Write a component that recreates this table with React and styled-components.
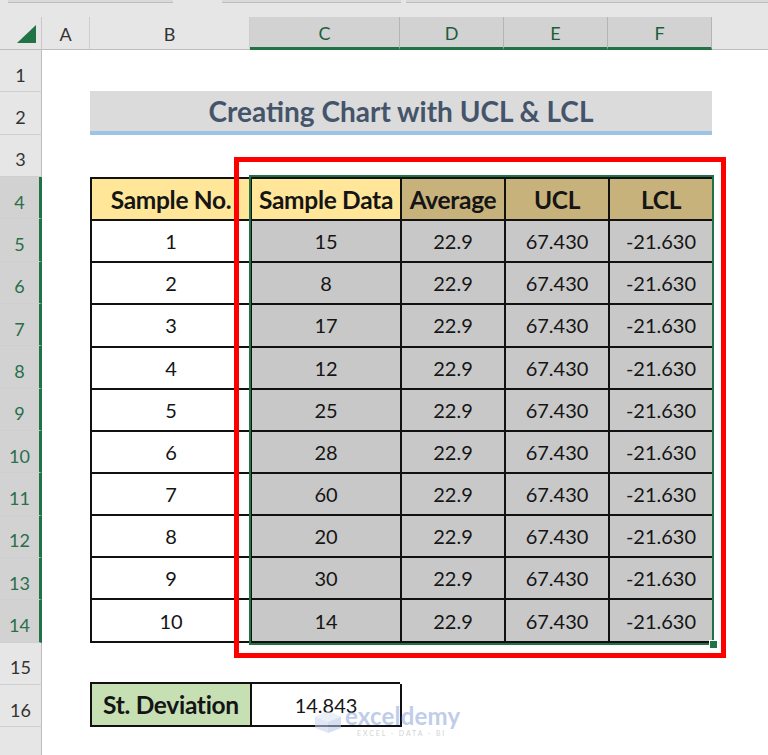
import React from "react";
import styled, { createGlobalStyle } from "styled-components";

const GlobalStyle = createGlobalStyle`
  html, body { margin: 0; padding: 0; background: #ffffff; }
  * { box-sizing: border-box; }
`;

const ROW_H = 42.33;
const GREEN = "#217346";

const Page = styled.div`
  width: 768px;
  height: 755px;
  overflow: hidden;
  display: flex;
  flex-direction: column;
  font-family: Lato, "Open Sans", sans-serif;
  background: #ffffff;
`;

const TopStrip = styled.div`
  height: 17px;
  flex: none;
  background: #e6e6e6;
  display: flex;
  align-items: flex-start;
  padding-left: 8px;
`;

const StripBar = styled.div`
  height: 3px;
  width: ${(p) => p.$w}px;
  margin-right: ${(p) => p.$gap || 0}px;
  flex: ${(p) => (p.$grow ? 1 : "none")};
  background: #d9d9d9;
  border-bottom: 1px solid #bdbdbd;
`;

const HeaderRow = styled.div`
  height: 33px;
  flex: none;
  display: flex;
  background: #e6e6e6;
`;

const Corner = styled.div`
  width: 42px;
  flex: none;
  display: flex;
  align-items: flex-end;
  justify-content: flex-end;
  padding: 0 5px 6px 0;
  border-right: 1px solid #c8c8c8;
  border-bottom: 1px solid #bdbdbd;
`;

const ColHead = styled.div`
  width: ${(p) => p.$w}px;
  flex: none;
  display: flex;
  align-items: center;
  justify-content: center;
  font-size: 18px;
  padding-top: 1px;
  color: ${(p) => (p.$sel ? "#1d5e3a" : "#333333")};
  background: ${(p) => (p.$sel ? "#d2d2d2" : "#e6e6e6")};
  border-right: 1px solid ${(p) => (p.$sel ? "#b4b4b4" : "#cdcdcd")};
  border-bottom: ${(p) => (p.$sel ? `3px solid ${GREEN}` : "1px solid #bdbdbd")};
`;

const HeaderFill = styled.div`
  flex: 1;
  border-bottom: 1px solid #bdbdbd;
`;

const Body = styled.div`
  flex: 1;
  display: flex;
  min-height: 0;
`;

const RowHeaders = styled.div`
  width: 42px;
  flex: none;
  display: flex;
  flex-direction: column;
  background: #e6e6e6;
`;

const RowHead = styled.div`
  height: ${ROW_H}px;
  flex: none;
  display: flex;
  align-items: center;
  justify-content: center;
  padding-top: 8px;
  font-size: 18px;
  color: ${(p) => (p.$sel ? "#2a6e4a" : "#333333")};
  background: ${(p) => (p.$sel ? "#d2d2d2" : "#e6e6e6")};
  border-bottom: 1px solid #cfcfcf;
  border-right: ${(p) => (p.$sel ? `3px solid ${GREEN}` : "1px solid #bdbdbd")};
`;

const Sheet = styled.div`
  flex: 1;
  position: relative;
  display: grid;
  grid-template-columns: 48px 160px 150px 104px 104px 104px 1fr;
  grid-template-rows: repeat(17, ${ROW_H}px);
  background: #ffffff;
`;

const Title = styled.div`
  grid-column: 2 / 7;
  grid-row: 2;
  margin-top: -1px;
  background: #dbdbdb;
  border-bottom: 4px solid #9dc3e6;
  display: flex;
  align-items: center;
  justify-content: center;
  font-size: 28px;
  font-weight: 700;
  color: #44546a;
  padding-top: 1px;
`;

const DataTable = styled.div`
  grid-column: 2 / 7;
  grid-row: 4 / 15;
  display: grid;
  grid-template-columns: 160px 150px 104px 104px 104px;
  grid-template-rows: repeat(11, 1fr);
  border-top: 2px solid #111;
  border-left: 2px solid #111;
`;

const Cell = styled.div`
  display: flex;
  align-items: center;
  justify-content: center;
  border-right: 2px solid #111;
  border-bottom: 2px solid #111;
  font-size: ${(p) => (p.$head ? "24.5px" : "20px")};
  font-weight: ${(p) => (p.$head ? 700 : 400)};
  color: #151515;
  background: ${(p) => p.$bg || "#ffffff"};
  white-space: nowrap;
  letter-spacing: ${(p) => (p.$head ? "-0.3px" : "0")};
`;

const Selection = styled.div`
  grid-column: 3 / 7;
  grid-row: 4 / 15;
  margin: -2px -2px -2px -1px;
  border: 2px solid ${GREEN};
  position: relative;
  pointer-events: none;
  z-index: 2;
`;

const FillHandle = styled.div`
  position: absolute;
  right: -6px;
  bottom: -6px;
  width: 9px;
  height: 9px;
  background: ${GREEN};
  border: 1px solid #ffffff;
`;

const RedFrame = styled.div`
  grid-column: 3 / 7;
  grid-row: 4 / 15;
  margin: -20px -14px -15px -16px;
  border: 5px solid #ff0000;
  pointer-events: none;
  z-index: 3;
`;

const StatTable = styled.div`
  grid-column: 2 / 4;
  grid-row: 16;
  margin-top: -3px;
  display: grid;
  grid-template-columns: 160px 150px;
  border-top: 2px solid #111;
  border-left: 2px solid #111;
`;

const Watermark = styled.div`
  position: absolute;
  left: 271px;
  top: 656px;
  display: flex;
  align-items: center;
  gap: 2px;
  opacity: 0.55;
  pointer-events: none;
  z-index: 4;
`;

const WmText = styled.div`
  display: flex;
  flex-direction: column;
  align-items: flex-start;
`;

const WmName = styled.div`
  font-size: 24px;
  font-weight: 700;
  color: #8ea6d8;
  line-height: 20px;
  letter-spacing: 0.2px;
`;

const WmSub = styled.div`
  font-size: 7px;
  color: #b0b0b0;
  letter-spacing: 1.9px;
  margin: 3px 0 0 12px;
  line-height: 8px;
`;

const columns = [
  { l: "A", w: 48 },
  { l: "B", w: 160 },
  { l: "C", w: 150, sel: true },
  { l: "D", w: 104, sel: true },
  { l: "E", w: 104, sel: true },
  { l: "F", w: 104, sel: true },
];

const data = [15, 8, 17, 12, 25, 28, 60, 20, 30, 14];

const YELLOW = "#ffe699";
const TAN = "#c8b27b";
const GRAY = "#c8c8c8";

export default function App() {
  return (
    <>
      <GlobalStyle />
      <Page>
        <TopStrip>
          <StripBar $w={165} $gap={49} />
          <StripBar $w={179} $gap={5} />
          <StripBar $grow />
        </TopStrip>
        <HeaderRow>
          <Corner>
            <svg width="19" height="18" viewBox="0 0 19 18">
              <polygon points="0,18 19,18 19,0" fill={GREEN} />
            </svg>
          </Corner>
          {columns.map((c) => (
            <ColHead key={c.l} $w={c.w} $sel={c.sel}>
              {c.l}
            </ColHead>
          ))}
          <HeaderFill />
        </HeaderRow>
        <Body>
          <RowHeaders>
            {Array.from({ length: 17 }, (_, i) => (
              <RowHead key={i} $sel={i + 1 >= 4 && i + 1 <= 14}>
                {i + 1 <= 16 ? i + 1 : ""}
              </RowHead>
            ))}
          </RowHeaders>
          <Sheet>
            <Title>Creating Chart with UCL &amp; LCL</Title>
            <DataTable>
              <Cell $head $bg={YELLOW}>Sample No.</Cell>
              <Cell $head $bg={YELLOW}>Sample Data</Cell>
              <Cell $head $bg={TAN}>Average</Cell>
              <Cell $head $bg={TAN}>UCL</Cell>
              <Cell $head $bg={TAN}>LCL</Cell>
              {data.map((v, i) => (
                <React.Fragment key={i}>
                  <Cell>{i + 1}</Cell>
                  <Cell $bg={GRAY}>{v}</Cell>
                  <Cell $bg={GRAY}>22.9</Cell>
                  <Cell $bg={GRAY}>67.430</Cell>
                  <Cell $bg={GRAY}>-21.630</Cell>
                </React.Fragment>
              ))}
            </DataTable>
            <Selection>
              <FillHandle />
            </Selection>
            <RedFrame />
            <StatTable>
              <Cell $head $bg="#c6e0b4">St. Deviation</Cell>
              <Cell>14.843</Cell>
            </StatTable>
            <Watermark>
              <svg width="30" height="24" viewBox="0 0 30 24">
                <polygon points="15,1 28,7 28,18 15,23 2,18 2,7" fill="#c9d5ec" />
                <polygon points="15,1 28,7 15,12 2,7" fill="#dbe4f4" />
                <polygon points="15,12 28,7 28,18 15,23" fill="#b6c6e6" />
              </svg>
              <WmText>
                <WmName>exceldemy</WmName>
                <WmSub>EXCEL - DATA - BI</WmSub>
              </WmText>
            </Watermark>
          </Sheet>
        </Body>
      </Page>
    </>
  );
}
